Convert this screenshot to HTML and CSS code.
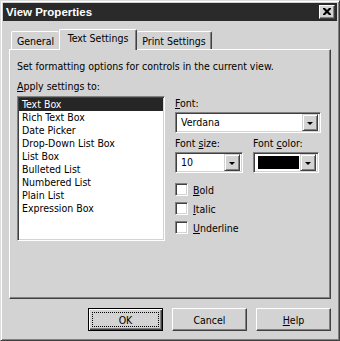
FILE: index.html
```html
<!DOCTYPE html>
<html>
<head>
<meta charset="utf-8">
<link rel="stylesheet" href="styles.css">
</head>
<body>
<div class="window">
  <div class="titlebar">
    <span class="title">View Properties</span>
    <span class="close"><svg width="8" height="7" viewBox="0 0 8 7"><path d="M0 0h2l2 2 2-2h2v1l-2.5 2.5L8 6v1H6L4 5 2 7H0V6l2.5-2.5L0 1z" fill="#000"/></svg></span>
  </div>
  <div class="tabs">
    <div class="tab t1">General</div>
    <div class="tab active">Text Settings</div>
    <div class="tab t3">Print Settings</div>
  </div>
  <div class="panel">
    <div class="desc">Set formatting options for controls in the current view.</div>
    <div class="cols">
      <div class="left">
        <div class="label"><u>A</u>pply settings to:</div>
        <div class="listbox">
          <div class="item sel">Text Box</div>
          <div class="item">Rich Text Box</div>
          <div class="item">Date Picker</div>
          <div class="item">Drop-Down List Box</div>
          <div class="item">List Box</div>
          <div class="item">Bulleted List</div>
          <div class="item">Numbered List</div>
          <div class="item">Plain List</div>
          <div class="item">Expression Box</div>
        </div>
      </div>
      <div class="right">
        <div class="label"><u>F</u>ont:</div>
        <div class="combo wide"><span class="val">Verdana</span><span class="arrow"><i></i></span></div>
        <div class="pair">
          <div class="field">
            <div class="label">Font <u>s</u>ize:</div>
            <div class="combo size"><span class="val">10</span><span class="arrow"><i></i></span></div>
          </div>
          <div class="field">
            <div class="label">Font <u>c</u>olor:</div>
            <div class="combo color"><span class="swatch"></span><span class="arrow"><i></i></span></div>
          </div>
        </div>
        <div class="checks">
          <div class="check"><span class="box"></span><span><u>B</u>old</span></div>
          <div class="check"><span class="box"></span><span><u>I</u>talic</span></div>
          <div class="check"><span class="box"></span><span><u>U</u>nderline</span></div>
        </div>
      </div>
    </div>
  </div>
  <div class="buttons">
    <div class="btn default"><span class="focus">OK</span></div>
    <div class="btn"><span>Cancel</span></div>
    <div class="btn"><span><u>H</u>elp</span></div>
  </div>
</div>
</body>
</html>
```
FILE: styles.css
```css
* { box-sizing: border-box; }
html, body { margin: 0; padding: 0; background: #d3d3d3; }
body { font-family: "DejaVu Sans Condensed", "DejaVu Sans", sans-serif; font-stretch: condensed; font-size: 10.5px; color: #000; }
u { text-decoration: underline; text-underline-offset: 1px; }
.window {
  width: 340px; height: 341px;
  background: #d3d3d3;
  border-top: 1px solid #dcdcdc; border-left: 1px solid #dcdcdc;
  border-right: 1px solid #404040; border-bottom: 1px solid #404040;
  box-shadow: inset 1px 1px 0 #ffffff, inset -1px -1px 0 #808080;
  padding: 2px 2px;
  display: flex; flex-direction: column;
}
.titlebar {
  height: 18px; background: #2a2a2a;
  display: flex; align-items: center; justify-content: space-between;
  padding: 0 2px 0 3px;
}
.title { color: #fff; font-family: "Liberation Sans", Arial, sans-serif; font-stretch: normal; font-weight: bold; font-size: 11.5px; }
.close {
  width: 16px; height: 14px; background: #d3d3d3;
  border-top: 1px solid #fff; border-left: 1px solid #fff;
  border-right: 1px solid #404040; border-bottom: 1px solid #404040;
  box-shadow: inset -1px -1px 0 #808080;
  display: flex; align-items: center; justify-content: center;
  padding-bottom: 1px;
}
.tabs { display: flex; margin: 8px 0 0 8px; align-items: flex-end; height: 20px; position: relative; z-index: 1; }
.tab {
  height: 18px; padding-top: 3px; text-align: center;
  border-top: 1px solid #fff; border-left: 1px solid #fff;
  border-right: 1px solid #404040;
  box-shadow: inset -1px 0 0 #808080;
  border-radius: 2px 2px 0 0;
  white-space: nowrap;
}
.t1 { width: 48px; border-right: none; box-shadow: none; }
.t3 { width: 75px; border-left: none; }
.tab.active { width: 78px; height: 21px; padding-top: 2px; background: #d3d3d3; margin-bottom: -1px; }
.panel {
  margin: 0 6px 0 6px; height: 250px;
  border-top: 1px solid #fff; border-left: 1px solid #fff;
  border-right: 1px solid #404040; border-bottom: 1px solid #404040;
  box-shadow: inset -1px -1px 0 #808080;
  padding: 10px 0 0 7px;
}
.desc { height: 13px; line-height: 13px; }
.cols { display: flex; margin-top: 7px; }
.left { width: 148px; }
.label { height: 13px; line-height: 13px; }
.listbox {
  margin-top: 3px; width: 148px; height: 145px; background: #fff;
  border-top: 1px solid #808080; border-left: 1px solid #808080;
  border-right: 1px solid #fff; border-bottom: 1px solid #fff;
  box-shadow: inset 1px 1px 0 #404040, inset -1px -1px 0 #d3d3d3;
  padding: 1px 1px;
}
.item { height: 13px; line-height: 13px; padding-left: 3px; }
.item.sel { background: #262626; color: #fff; }
.right { margin-left: 10px; padding-top: 17px; width: 147px; }
.combo {
  height: 21px; background: #fff; margin-top: 2px;
  border-top: 1px solid #808080; border-left: 1px solid #808080;
  border-right: 1px solid #fff; border-bottom: 1px solid #fff;
  box-shadow: inset 1px 1px 0 #404040, inset -1px -1px 0 #d3d3d3;
  display: flex; align-items: center; padding: 2px 2px 2px 2px;
}
.combo .val { flex: 1; padding-left: 3px; line-height: 15px; }
.arrow {
  width: 16px; height: 17px; background: #d3d3d3;
  border-top: 1px solid #d3d3d3; border-left: 1px solid #d3d3d3;
  border-right: 1px solid #404040; border-bottom: 1px solid #404040;
  box-shadow: inset 1px 1px 0 #fff, inset -1px -1px 0 #808080;
  display: flex; align-items: center; justify-content: center;
}
.arrow i { width: 0; height: 0; border-left: 3px solid transparent; border-right: 3px solid transparent; border-top: 3px solid #000; margin-top: 1px; }
.wide { width: 146px; }
.pair { display: flex; margin-top: 4px; }
.field + .field { margin-left: 10px; }
.size { width: 68px; }
.color { width: 66px; }
.swatch { flex: 1; height: 13px; margin: 0 1px 0 2px; background: #000; }
.checks { margin-top: 7px; }
.check { display: flex; align-items: center; height: 19px; }
.box {
  width: 13px; height: 13px; background: #fff; margin-right: 5px;
  border-top: 1px solid #808080; border-left: 1px solid #808080;
  border-right: 1px solid #fff; border-bottom: 1px solid #fff;
  box-shadow: inset 1px 1px 0 #404040, inset -1px -1px 0 #d3d3d3;
}
.buttons { display: flex; justify-content: flex-end; gap: 9px; margin-top: 9px; padding-right: 6px; }
.btn {
  width: 75px; height: 23px;
  border-top: 1px solid #fff; border-left: 1px solid #fff;
  border-right: 1px solid #404040; border-bottom: 1px solid #404040;
  box-shadow: inset -1px -1px 0 #808080;
  display: flex; align-items: center; justify-content: center;
}
.btn.default { border: 1px solid #000; box-shadow: inset 1px 1px 0 #fff, inset -1px -1px 0 #404040, inset -2px -2px 0 #808080; padding: 3px; }
.btn .focus { flex: 1; align-self: stretch; border: 1px dotted #000; display: flex; align-items: center; justify-content: center; }
```
